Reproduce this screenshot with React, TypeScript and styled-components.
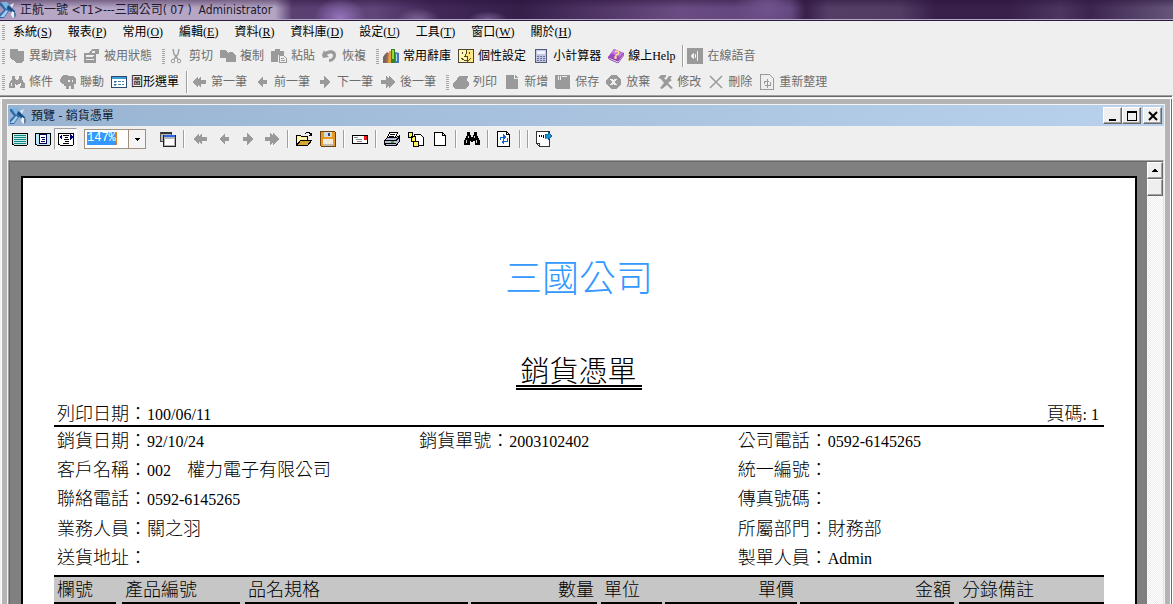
import React from "react";
import styled, { createGlobalStyle, css } from "styled-components";

const UI_FONT = `"Liberation Serif", "Noto Sans CJK TC", sans-serif`;
const TITLE_FONT = `"DejaVu Sans Condensed", "Noto Sans CJK TC", sans-serif`;
const DOC_FONT = `"Liberation Serif", "Noto Sans CJK TC", serif`;

const GlobalStyle = createGlobalStyle`
  * { box-sizing: border-box; }
  body { margin: 0; background: #efefef; }
  button, input { font: inherit; color: inherit; }
`;

/* ---------- application shell ---------- */

const Shell = styled.div`
  display: flex;
  flex-direction: column;
  height: 100vh;
  overflow: hidden;
  background: #efefef;
  color: #000;
  font: 12px/16px ${UI_FONT};
`;

const TitleBar = styled.header`
  display: flex;
  flex: none;
  align-items: center;
  height: 21px;
  border-bottom: 1px solid #2c1b3c;
  box-shadow: inset 0 -1px 0 #b3a3c4;
  background:
    radial-gradient(ellipse 26px 20px at 340px 18px, #9474bc, transparent),
    radial-gradient(ellipse 22px 12px at 418px 20px, #7d6596, transparent),
    radial-gradient(ellipse 20px 9px at 488px 20px, #775c90, transparent),
    radial-gradient(ellipse 34px 26px at 768px 8px, #70538c, transparent),
    linear-gradient(to bottom, rgba(40, 16, 56, 0.45), rgba(40, 16, 56, 0) 8px),
    linear-gradient(to right, #a892ba 0, #b8a8c8 24px, #b5a5c5 275px, #5a3f70 292px, #5b3f74 325px,
      #5f4578 375px, #43285a 430px, #35204a 520px, #4a3060 580px, #6a4c82 680px, #5f437a 790px,
      #38204a 806px, #543e66 828px, #523c64 900px, #38204a 935px, #38204a 1010px, #4c3660 1060px,
      #3c2650 1090px, #66567a 1173px);
`;

const AppTitle = styled.h1`
  margin: 0;
  padding-left: 4px;
  color: #20182c;
  font: 400 12px/19px ${TITLE_FONT};
  white-space: pre;
`;

const MenuBar = styled.nav`
  display: flex;
  flex: none;
  align-items: center;
  height: 22px;
  padding-left: 2px;
`;

const MenuButton = styled.button`
  padding: 0 8px;
  border: 0;
  background: none;
  font-size: 12px;
  line-height: 16px;
  white-space: nowrap;
`;

const ToolRow = styled.div`
  display: flex;
  flex: none;
  align-items: center;
  height: 26px;
  padding-left: 2px;
`;

const Grip = styled.span<{ $inner?: boolean; $tight?: boolean }>`
  flex: none;
  width: 3px;
  height: 15px;
  margin-left: ${(p) => (p.$inner ? 3 : 0)}px;
  margin-right: ${(p) => (p.$tight ? 0 : 4)}px;
  background: repeating-linear-gradient(to bottom, #a6a6a6 0 1px, #efefef 1px 2px);
`;

const Divider = styled.span`
  flex: none;
  width: 2px;
  height: 22px;
  margin-right: 3px;
  border-left: 1px solid #a0a0a0;
  border-right: 1px solid #fff;
`;

const ToolButton = styled.button`
  display: flex;
  flex: none;
  align-items: center;
  gap: 4px;
  margin: 0 7px 0 0;
  padding: 0;
  border: 0;
  background: none;
  font-size: 12px;
  line-height: 16px;
  white-space: nowrap;

  &:disabled { color: #6d6d6d; }
`;

const Glyph = styled.svg`
  display: block;
  flex: none;
  width: 16px;
  height: 16px;
`;

/* ---------- preview window ---------- */

const Workspace = styled.main`
  display: flex;
  flex: 1;
  flex-direction: column;
  min-height: 0;
  border-top: 1px solid #a0a0a0;
  border-right: 1px solid #fff;
  box-shadow: inset 0 1px 0 #696969;
  padding: 3px 2px 0 2px;
`;

const WindowFrame = styled.section`
  display: flex;
  flex: 1;
  flex-direction: column;
  min-height: 0;
  border: solid #b4b4b4;
  border-width: 5px 5px 0 5px;
  outline: 1px solid #fff;
  box-shadow: 2px 0 0 #696969;
`;

const WindowBody = styled.div`
  display: flex;
  flex: 1;
  flex-direction: column;
  min-height: 0;
  border: solid #f4f4f4;
  border-width: 1px 1px 0;
`;

const WindowTitle = styled.div`
  display: flex;
  flex: none;
  align-items: center;
  height: 21px;
  padding: 0 2px;
  background: linear-gradient(to right, #98b4d2, #b9d1ec);
`;

const WindowName = styled.h2`
  flex: 1;
  margin: 0;
  padding-left: 5px;
  color: #14202e;
  font: 400 12px/20px ${TITLE_FONT};
`;

const CaptionButton = styled.button<{ $gap?: boolean }>`
  display: flex;
  align-items: center;
  justify-content: center;
  width: 19px;
  height: 17px;
  margin-left: ${(p) => (p.$gap ? 2 : 0)}px;
  padding: 0;
  border: 1px solid;
  border-color: #fff #696969 #696969 #fff;
  box-shadow: inset -1px -1px 0 #a0a0a0;
  background: #efefef;
`;

const PreviewBar = styled.div`
  display: flex;
  flex: none;
  align-items: center;
  height: 34px;
  padding-bottom: 8px;
`;

const IconButton = styled.button<{ $mode?: boolean; $pressed?: boolean }>`
  display: flex;
  flex: none;
  align-items: center;
  justify-content: center;
  width: ${(p) => (p.$mode ? 23 : 24)}px;
  height: 22px;
  padding: 0;
  border: 1px solid transparent;
  background: none;
  ${(p) =>
    p.$pressed &&
    css`
      border-color: #a0a0a0 #fff #fff #a0a0a0;
      background: #f7f7f7;
    `}
`;

const BarDivider = styled.span`
  flex: none;
  width: 2px;
  height: 18px;
  margin: 0 3px;
  border-left: 1px solid #a0a0a0;
  border-right: 1px solid #fff;
`;

const ZoomBox = styled.div`
  display: flex;
  flex: none;
  width: 62px;
  height: 20px;
  margin: 0 10px 0 7px;
  border: 1px solid #a09080;
  background: #fff;
`;

const ZoomField = styled.div`
  flex: 1;
  padding: 2px 0 0 2px;
`;

const ZoomInput = styled.input`
  display: block;
  width: 30px;
  height: 13px;
  padding: 0;
  border: 0;
  border-right: 1px solid #e08020;
  border-radius: 0;
  background: #3399ff;
  color: #fff;
  font: 12px/13px "Liberation Mono", monospace;
`;

const ZoomDrop = styled.button`
  display: flex;
  align-items: center;
  justify-content: center;
  width: 17px;
  padding: 0;
  border: 0;
  border-left: 1px solid #a09080;
  background: #f4f4f4;
`;

const Viewport = styled.div`
  display: flex;
  flex: 1;
  min-height: 0;
  border-top: 1px solid #a0a0a0;
  border-left: 1px solid #a0a0a0;
  border-right: 1px solid #e3e3e3;
  box-shadow: inset 1px 1px 0 #696969;
  background: #808080;
`;

const PageArea = styled.div`
  flex: 1;
  min-width: 0;
  padding: 15px 10px 0 12px;
`;

const ScrollBar = styled.div`
  display: flex;
  flex: none;
  flex-direction: column;
  width: 16px;
  margin-top: 1px;
  background: repeating-conic-gradient(#fff 0 25%, #ececec 0 50%) 0 0 / 2px 2px;
`;

const ScrollButton = styled.button`
  display: flex;
  flex: none;
  align-items: center;
  justify-content: center;
  width: 16px;
  height: 17px;
  padding: 0;
  border: 1px solid;
  border-color: #fff #696969 #696969 #fff;
  box-shadow: inset -1px -1px 0 #a0a0a0;
  background: #efefef;
`;

/* ---------- report page ---------- */

const Page = styled.article`
  min-height: 1500px;
  padding: 80px 31px 0;
  border: 2px solid #000;
  background: #fff;
  font: 300 18px/24px ${DOC_FONT};
`;

const Company = styled.h3`
  margin: 0;
  color: #3399ff;
  font-weight: 300;
  font-size: 37px;
  line-height: 44px;
  text-align: center;
`;

const DocTitle = styled.h4`
  width: fit-content;
  margin: 58px auto 0;
  padding: 0 5px 0 4px;
  border-bottom: 5px double #000;
  font-weight: 300;
  font-size: 29px;
  line-height: 25px;
`;

const PrintLine = styled.div`
  display: flex;
  justify-content: space-between;
  margin-top: 14px;
  padding: 0 5px 0 3px;
  border-bottom: 2px solid #000;
  line-height: 20px;
`;

const InfoGrid = styled.dl`
  display: grid;
  grid-template-columns: 362fr 318fr 366fr;
  grid-auto-rows: 1fr;
  height: 148px;
  margin: 0;
  padding: 2px 0 0 3px;
`;

const InfoItem = styled.div<{ $column: number }>`
  display: flex;
  grid-column: ${(p) => p.$column};
  white-space: pre;
`;

const Term = styled.dt``;

const Value = styled.dd`
  margin: 0;
`;

const Latin = styled.span`
  font-size: 16px;
`;

const ItemTable = styled.table`
  width: 100%;
  border-top: 2px solid #000;
  border-collapse: collapse;
  table-layout: fixed;
  background: #c6c6c6;
`;

const HeadCell = styled.th<{ $width?: number; $right?: boolean; $gap: number }>`
  width: ${(p) => (p.$width ? `${p.$width}px` : "auto")};
  padding: 2px ${(p) => p.$gap}px 2px 0;
  font-weight: 300;
  text-align: ${(p) => (p.$right ? "right" : "left")};
`;

const HeadText = styled.div`
  padding: 0 3px;
  border-bottom: 2px solid #000;
  line-height: 23px;
`;

/* ---------- icons ---------- */

const G = "#9a9a9a";

const shapes: Record<string, React.ReactNode> = {
  logo: (
    <>
      <path d="M0 1h7l8 8v3l-6-3-5 7H0v-4l4-4-4-5z" fill="#2d6aa8" />
      <path d="M1 0h6l3 4-4 3z" fill="#7db4e2" />
      <path d="M0 15l6-7 2 1-4 6z" fill="#a5cdee" />
      <path d="M8 3l7 7v2l-8-6z" fill="#174a80" />
      <path d="M10 3l4-2-2 5z" fill="#dfe9f2" />
      <path d="M12 9l3 2v3l-2 2-2-3z" fill="#eef3f7" />
      <path d="M14 10l2 1v3l-2 2z" fill="#5a7d9d" />
    </>
  ),
  change: <path d="M1 1h8v2h6v9l-2 3H7l-2-3H3L1 10z" fill={G} />,
  status: (
    <path d="M7 2l2-1h6v5h-3v9H0V5h5zM2 7v2h6l2-2zm0 4v1h8v-1zM8 3v2h3V3z" fill={G} fillRule="evenodd" />
  ),
  cut: (
    <g fill="none" stroke={G}>
      <path d="M4 1l1 5 4 5M10 1L9 6l-4 5" strokeWidth="1.4" />
      <circle cx="4" cy="13" r="1.8" />
      <circle cx="10" cy="13" r="1.8" />
    </g>
  ),
  copy: <path d="M0 2h5l3 3h1v-1h3l4 4v6H6v-4H0z" fill={G} />,
  paste: (
    <>
      <path d="M0 3h4V1h5v2h4v4H7v7H0z" fill={G} />
      <path d="M8.500 7.500h4l3 3v4h-7z" fill="#efefef" stroke={G} />
      <path d="M10 10.500h3M10 12.500h4" stroke={G} />
    </>
  ),
  undo: <path d="M0 7l2-5 1 2c5-3 11-2 11 3 0 4-3 7-7 7v-3c3 0 4-2 4-4-1-2-4-2-6 0l2 2-6 1z" fill={G} />,
  books: (
    <>
      <path d="M1 8l3-4 2 1v10H0z" fill="#b86a55" />
      <path d="M0 9l3-4 1 1-1 9H0z" fill="#706860" />
      <path d="M6 3h3v12H5z" fill="#e8a13c" />
      <path d="M8 1h4v14H8z" fill="#31851e" />
      <path d="M9 2h2v9H9z" fill="#8fd83e" />
      <path d="M12 4l4 1v10h-4z" fill="#4478b8" />
      <path d="M13 6h1v7h-1z" fill="#b6d7f4" />
    </>
  ),
  person: (
    <>
      <path d="M.5 1.500h15v13H.5z" fill="#fff5b4" stroke="#4a4430" />
      <path d="M9 2h6v12H9l1-4H8z" fill="#ffe884" />
      <path d="M8.500 2v3l-1.500 3h2v6M4.500 4v2M11.500 4v2M3 10l3 2h5l2-2" fill="none" stroke="#514720" />
    </>
  ),
  calc: (
    <>
      <path d="M2.500 1.500h11v13h-11z" fill="#c3c8e2" stroke="#565a78" />
      <path d="M4 3h8v3H4z" fill="#eef2ff" />
      <path d="M4 8h2v1H4zM7 8h2v1H7zM10 8h2v1h-2zM4 10h2v1H4zM7 10h2v1H7zM10 10h2v1h-2zM4 12h2v1H4zM7 12h2v1H7zM10 12h2v1h-2z" fill="#6a70a0" />
    </>
  ),
  help: (
    <>
      <path d="M6 1l10 4-6 9L0 9z" fill="#a044c8" />
      <path d="M6 1l9 4-3 4-9-4z" fill="#c27be0" />
      <path d="M0 9l10 4 6-8v2l-6 8-9-4z" fill="#f0e2f6" stroke="#7d2ca2" strokeWidth=".8" />
      <path d="M7 4c2-2 5 0 3 2L8 7v1M7 9h1v1H7z" fill="none" stroke="#fff27a" strokeWidth="1.300" />
    </>
  ),
  voice: (
    <>
      <path d="M0 0h16v16H0z" fill={G} />
      <path d="M3 8l4-4v8z" fill="#efefef" />
      <path d="M8.500 6v4M10.500 3v10" stroke="#efefef" />
    </>
  ),
  find: (
    <path d="M3 2h3v3h1v1h2V5h1V2h3v3l3 5v4h-5v-4H9v1H7v-1H6v4H0v-4l3-5zM2 9v3h1V9zM11 9v3h1V9z" fill={G} fillRule="evenodd" />
  ),
  link: (
    <path d="M1 3l2-2h4l2 1h4l3 3v5h-2v5h-3v-3H9v3H6v-3H4v-2H2L0 7zM8 6v2h2V6zM12 6v2h1V6z" fill={G} fillRule="evenodd" />
  ),
  chart: (
    <>
      <path d="M.5 2.500h15v11H.5z" fill="#fff" stroke="#2a4a6e" />
      <path d="M1 3h14v2H1z" fill="#3d9be0" />
      <path d="M3 7h2v1H3zM3 10h2v1H3z" fill="#2d6aa0" stroke="#2d6aa0" strokeWidth=".6" />
      <path d="M7 7.500h6M7 10.500h6" stroke="#4d7fae" strokeDasharray="3 1" />
    </>
  ),
  first: <path d="M1 8l6-6v3l3-3v4h5v4h-5v4l-3-3v3z" fill={G} />,
  prev: <path d="M3 8l6-6v4h4v4H9v4z" fill={G} />,
  next: <path d="M13 8L7 2v4H3v4h4v4z" fill={G} />,
  last: <path d="M15 8L9 2v3L6 2v4H1v4h5v4l3-3v3z" fill={G} />,
  print: <path d="M5 3l1-1h9l-1 5 2 1v4l-4 3H2l-2-3v-2l2-3 2-1z" fill={G} />,
  add: <path d="M2 1h8v4h4v10H2zM11 1l3 3h-3z" fill={G} />,
  save: <path d="M0 1h15v14H1l-1-1zM3 2v4h1V2zM5 2v4h1V2zM7 2v1h5V2z" fill={G} fillRule="evenodd" />,
  abandon: (
    <>
      <path d="M5 1h5l5 5v4l-5 5H5l-5-5V6z" fill={G} />
      <path d="M5 5l5 6M10 5l-5 6" stroke="#efefef" strokeWidth="2" />
    </>
  ),
  edit: (
    <path d="M1 4l3-3h5v2L7 4l2 2 3-4h3l-2 3 2 1-4 3 5 5-2 1-4-4-5 4-2-1 4-5-3-4z" fill={G} />
  ),
  remove: <path d="M2 2l12 12M14 2L2 14" stroke={G} strokeWidth="1.500" />,
  reload: (
    <>
      <path d="M1.500.5h9l4 4v11h-13z" fill="none" stroke={G} />
      <path d="M5 9.500V7.500h5M8 5v5M11 8v3.500H6M8 9v5" fill="none" stroke={G} />
    </>
  ),
  fit: (
    <>
      <path d="M.5 3q0-1 1-1h13q1 0 1 1v10q0 1-1 1h-13q-1 0-1-1z" fill="#c9ece9" stroke="#000" />
      <path d="M2 4.500h12M2 6.500h12M2 8.500h12M2 10.500h12M2 12.500h12" stroke="#0f8783" />
    </>
  ),
  whole: (
    <>
      <path d="M.5 3q0-1 1-1h13q1 0 1 1v10q0 1-1 1h-13q-1 0-1-1z" fill="#bdeaff" stroke="#000" />
      <path d="M4.500 3.500h7v9h-7z" fill="#fff" stroke="#00004d" />
      <path d="M6 6.500h4M7 8.500h3M6 10.500h4" stroke="#00004d" />
    </>
  ),
  width: (
    <>
      <path d="M.5 3q0-1 1-1h13q1 0 1 1v10q0 1-1 1h-13q-1 0-1-1z" fill="#fff" stroke="#000" />
      <path d="M1 6l3-3v6zM15 6l-3-3v6z" fill="#000078" />
      <path d="M5 4.500h6M7 6.500h3M6 8.500h5M7 10.500h4M5 12.500h6" stroke="#000" />
    </>
  ),
  windows: (
    <>
      <path d="M.5 1.500h11v9H.5z" fill="#b5b5b5" stroke="#4a4a4a" />
      <path d="M1 1h11v2H1z" fill="#333" />
      <path d="M3.500 4.500h12v11h-12z" fill="#b5b5b5" stroke="#222" />
      <path d="M4 4h11v2H4z" fill="#2c68e6" />
      <path d="M5 8h9v6H5z" fill="#fff" />
    </>
  ),
  open: (
    <>
      <path d="M.5 4.500h4l1 1h6v4l-7 1-4 4z" fill="#fff3a6" stroke="#000" />
      <path d="M.5 14.500l4-5h11l-4 5z" fill="#d9a632" stroke="#000" />
      <path d="M9 3l2-2h2l2 3M13 4h2V2" fill="none" stroke="#000" />
    </>
  ),
  disk: (
    <>
      <path d="M.5.5h14l1 1v14H1.500l-1-1z" fill="#e69a24" stroke="#6b4210" />
      <path d="M4 1h8v5H4z" fill="#d3dbe2" />
      <path d="M8 2h2v3H8z" fill="#33456a" />
      <path d="M3 8h10v7H3z" fill="#efe9de" />
      <path d="M3 13h10v2H3z" fill="#c2bdb2" />
    </>
  ),
  mail: (
    <>
      <path d="M.5 4.500h15v8H.5z" fill="#fff" stroke="#000" />
      <path d="M2 6.500h4M4 8.500h6M5 10.500h5" stroke="#8a8a8a" />
      <path d="M12 5h3v4h-3z" fill="#e51616" />
      <path d="M13 6h1v1h-1z" fill="#27b327" />
    </>
  ),
  printer: (
    <>
      <path d="M5.500 1.500h8l-2 5h-8z" fill="#fff" stroke="#000" />
      <path d="M6 3.500h5M5 5.500h5" stroke="#000" />
      <path d="M.5 9.500l3-3h9l3-2v6l-3 3.500h-11l-1-1z" fill="#b9b9d9" stroke="#000" />
      <path d="M1 9.500h11l3-3M1 12.500h11" fill="none" stroke="#000" />
      <path d="M7 10h3v2H7z" fill="#2db52d" />
    </>
  ),
  pages: (
    <>
      <path d="M6.500 3.500h6l3 3v8h-9z" fill="#fff" stroke="#000" />
      <path d="M.5 1.500h4v5h-4zM3.500 5.500h4v5h-4zM5.500 10.500h5v5h-5z" fill="#fff24a" stroke="#000" />
    </>
  ),
  blank: (
    <>
      <path d="M2.500 1.500h8l3 3v10h-11z" fill="#fff" stroke="#000" />
      <path d="M10.500 1.500v3h3" fill="none" stroke="#000" />
    </>
  ),
  binoculars: (
    <>
      <path d="M3 1h3v3h1v2h2V4h1V1h3v3l3 6v4h-5v-4H9v1H7v-1H6v4H0v-4l3-6z" fill="#000" />
      <path d="M4 5v2M2 9v3M10 5v2M12 9v3" stroke="#fff" strokeWidth=".8" />
    </>
  ),
  refresh: (
    <>
      <path d="M1.500.5h9l3 3v12h-12z" fill="#fff" stroke="#000" />
      <path d="M10.500.5v3h3" fill="none" stroke="#000" />
      <path d="M4.500 9V6.500H7M11.500 7v3.500H8" fill="none" stroke="#1266d0" />
      <path d="M7 3l3 3-3 3zM8 8v6l-3-3z" fill="#1266d0" />
    </>
  ),
  exit: (
    <>
      <path d="M.5.500h13v15h-10l-3-3z" fill="#fff" stroke="#333" />
      <path d="M.5 12.500h3v3" fill="none" stroke="#333" />
      <path d="M3.500 4v2M5.500 4v2M7.500 4v3" stroke="#000" />
      <path d="M9 3h3V1l4 4-4 4V7H9z" fill="#1690d2" stroke="#0a4a78" strokeWidth=".6" />
    </>
  ),
  minimize: <path d="M4 11h7v2H4z" fill="#000" />,
  maximize: <path d="M3 3h10v10H3zM4 5v7h8V5z" fill="#000" fillRule="evenodd" />,
  close: <path d="M4 4l8 8M12 4l-8 8" stroke="#000" strokeWidth="2" />,
  up: <path d="M4 9h7L7.500 5.500z" fill="#000" />,
  down: <path d="M5 7h6l-3 3z" fill="#000" />,
};

const soft = new Set(["logo", "help", "books", "cut", "remove", "close", "undo", "edit"]);

const Icon = ({ name }: { name: string }) => (
  <Glyph viewBox="0 0 16 16" shapeRendering={soft.has(name) ? "auto" : "crispEdges"} aria-hidden="true">
    {shapes[name]}
  </Glyph>
);

/* ---------- content ---------- */

const menus: [string, string][] = [
  ["系統", "S"],
  ["報表", "P"],
  ["常用", "O"],
  ["編輯", "E"],
  ["資料", "R"],
  ["資料庫", "D"],
  ["設定", "U"],
  ["工具", "T"],
  ["窗口", "W"],
  ["關於", "H"],
];

type Tool = { icon: string; text: string; on?: boolean } | "grip" | "line";

const upperTools: Tool[] = [
  { icon: "change", text: "異動資料" },
  { icon: "status", text: "被用狀態" },
  "grip",
  { icon: "cut", text: "剪切" },
  { icon: "copy", text: "複制" },
  { icon: "paste", text: "粘貼" },
  { icon: "undo", text: "恢複" },
  "grip",
  { icon: "books", text: "常用辭庫", on: true },
  { icon: "person", text: "個性設定", on: true },
  { icon: "calc", text: "小計算器", on: true },
  { icon: "help", text: "線上Help", on: true },
  "line",
  { icon: "voice", text: "在線語音" },
];

const lowerTools: Tool[] = [
  { icon: "find", text: "條件" },
  { icon: "link", text: "聯動" },
  { icon: "chart", text: "圖形選單", on: true },
  "line",
  { icon: "first", text: "第一筆" },
  { icon: "prev", text: "前一筆" },
  { icon: "next", text: "下一筆" },
  { icon: "last", text: "後一筆" },
  "grip",
  { icon: "print", text: "列印" },
  { icon: "add", text: "新增" },
  { icon: "save", text: "保存" },
  { icon: "abandon", text: "放棄" },
  { icon: "edit", text: "修改" },
  { icon: "remove", text: "刪除" },
  { icon: "reload", text: "重新整理" },
];

const ToolStrip = ({ tools, label }: { tools: Tool[]; label: string }) => (
  <ToolRow role="toolbar" aria-label={label}>
    <Grip />
    {tools.map((tool, i) => {
      if (tool === "grip") return <Grip key={i} $inner />;
      if (tool === "line") return <Divider key={i} />;
      return (
        <ToolButton key={i} type="button" disabled={!tool.on}>
          <Icon name={tool.icon} />
          {tool.text}
        </ToolButton>
      );
    })}
  </ToolRow>
);

const previewTools: { icon: string; label: string; off?: boolean }[][] = [
  [{ icon: "windows", label: "視窗" }],
  [
    { icon: "first", label: "第一頁", off: true },
    { icon: "prev", label: "上一頁", off: true },
    { icon: "next", label: "下一頁", off: true },
    { icon: "last", label: "最後一頁", off: true },
  ],
  [
    { icon: "open", label: "開啟" },
    { icon: "disk", label: "儲存" },
  ],
  [{ icon: "mail", label: "郵件" }],
  [
    { icon: "printer", label: "列印" },
    { icon: "pages", label: "多頁" },
    { icon: "blank", label: "單頁" },
  ],
  [{ icon: "binoculars", label: "尋找" }],
  [{ icon: "refresh", label: "重新整理" }],
  [],
  [{ icon: "exit", label: "離開" }],
];

const info: { column: number; term: string; latin?: string; text?: string }[] = [
  { column: 1, term: "銷貨日期：", latin: "92/10/24" },
  { column: 2, term: "銷貨單號：", latin: "2003102402" },
  { column: 3, term: "公司電話：", latin: "0592-6145265" },
  { column: 1, term: "客戶名稱：", latin: "002    ", text: "權力電子有限公司" },
  { column: 3, term: "統一編號：" },
  { column: 1, term: "聯絡電話：", latin: "0592-6145265" },
  { column: 3, term: "傳真號碼：" },
  { column: 1, term: "業務人員：", text: "關之羽" },
  { column: 3, term: "所屬部門：", text: "財務部" },
  { column: 1, term: "送貨地址：" },
  { column: 3, term: "製單人員：", latin: "Admin" },
];

const columns: { text: string; width?: number; right?: boolean; gap: number }[] = [
  { text: "欄號", width: 68, gap: 6 },
  { text: "產品編號", width: 123, gap: 5 },
  { text: "品名規格", gap: 3 },
  { text: "數量", width: 130, right: true, gap: 4 },
  { text: "單位", width: 64, gap: 3 },
  { text: "單價", width: 135, right: true, gap: 3 },
  { text: "金額", width: 159, right: true, gap: 5 },
  { text: "分錄備註", width: 145, gap: 0 },
];

export default function App() {
  return (
    <Shell>
      <GlobalStyle />
      <TitleBar>
        <Icon name="logo" />
        <AppTitle>{"正航一號 <T1>---三國公司( 07 )  Administrator"}</AppTitle>
      </TitleBar>

      <MenuBar>
        <Grip $tight />
        {menus.map(([text, key]) => (
          <MenuButton key={key} type="button">
            {text}(<u>{key}</u>)
          </MenuButton>
        ))}
      </MenuBar>
      <ToolStrip tools={upperTools} label="常用工具" />
      <ToolStrip tools={lowerTools} label="資料工具" />

      <Workspace>
        <WindowFrame>
          <WindowBody>
            <WindowTitle>
              <Icon name="logo" />
              <WindowName>預覽 - 銷貨憑單</WindowName>
              <CaptionButton type="button" aria-label="最小化">
                <Icon name="minimize" />
              </CaptionButton>
              <CaptionButton type="button" aria-label="最大化">
                <Icon name="maximize" />
              </CaptionButton>
              <CaptionButton type="button" aria-label="關閉" $gap>
                <Icon name="close" />
              </CaptionButton>
            </WindowTitle>

            <PreviewBar role="toolbar" aria-label="預覽工具">
              <IconButton type="button" aria-label="整頁" $mode>
                <Icon name="fit" />
              </IconButton>
              <IconButton type="button" aria-label="原始大小" $mode>
                <Icon name="whole" />
              </IconButton>
              <IconButton type="button" aria-label="頁寬" $mode $pressed>
                <Icon name="width" />
              </IconButton>
              <ZoomBox>
                <ZoomField>
                  <ZoomInput aria-label="縮放比例" defaultValue="147%" />
                </ZoomField>
                <ZoomDrop type="button" aria-label="選擇縮放比例">
                  <Icon name="down" />
                </ZoomDrop>
              </ZoomBox>
              {previewTools.map((group, i) => (
                <React.Fragment key={i}>
                  {i > 0 && <BarDivider />}
                  {group.map((tool) => (
                    <IconButton key={tool.label} type="button" aria-label={tool.label} disabled={tool.off}>
                      <Icon name={tool.icon} />
                    </IconButton>
                  ))}
                </React.Fragment>
              ))}
            </PreviewBar>

            <Viewport>
              <PageArea>
                <Page>
                  <Company>三國公司</Company>
                  <DocTitle>銷貨憑單</DocTitle>
                  <PrintLine>
                    <span>
                      列印日期：<Latin>100/06/11</Latin>
                    </span>
                    <span>
                      頁碼<Latin>: 1</Latin>
                    </span>
                  </PrintLine>
                  <InfoGrid>
                    {info.map((item) => (
                      <InfoItem key={item.term} $column={item.column}>
                        <Term>{item.term}</Term>
                        <Value>
                          {item.latin && <Latin>{item.latin}</Latin>}
                          {item.text}
                        </Value>
                      </InfoItem>
                    ))}
                  </InfoGrid>
                  <ItemTable>
                    <thead>
                      <tr>
                        {columns.map((c) => (
                          <HeadCell key={c.text} scope="col" $width={c.width} $right={c.right} $gap={c.gap}>
                            <HeadText>{c.text}</HeadText>
                          </HeadCell>
                        ))}
                      </tr>
                    </thead>
                  </ItemTable>
                </Page>
              </PageArea>
              <ScrollBar>
                <ScrollButton type="button" aria-label="向上捲動">
                  <Icon name="up" />
                </ScrollButton>
                <ScrollButton type="button" aria-label="捲動軸" />
              </ScrollBar>
            </Viewport>
          </WindowBody>
        </WindowFrame>
      </Workspace>
    </Shell>
  );
}
